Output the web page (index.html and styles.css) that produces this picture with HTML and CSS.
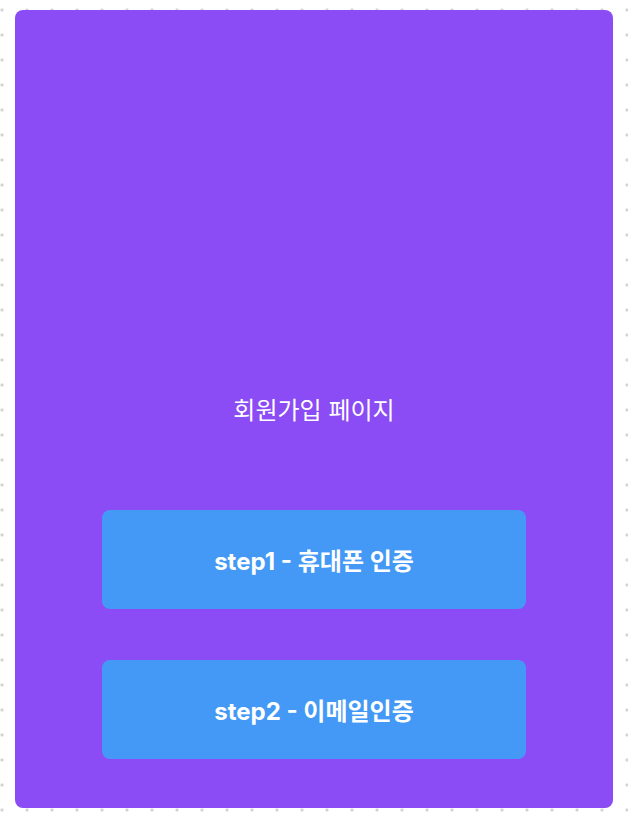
FILE: index.html
```html
<!DOCTYPE html>
<html lang="ko">
<head>
<meta charset="utf-8">
<title>회원가입 페이지</title>
<link rel="stylesheet" href="styles.css">
</head>
<body>
  <main class="card">
    <h1 class="title">회원가입 페이지</h1>
    <div class="actions">
      <button class="step-btn" type="button">step1 - 휴대폰 인증</button>
      <button class="step-btn" type="button">step2 - 이메일인증</button>
    </div>
  </main>
</body>
</html>
```
FILE: styles.css
```css
html, body {
  margin: 0;
  height: 100%;
}
body {
  padding: 10px 15px 0 15px;
  box-sizing: border-box;
  background-color: #ffffff;
  background-image: radial-gradient(circle, #c8c8c8 1.1px, transparent 1.6px);
  background-size: 25px 25px;
  background-position: -10.5px -2.5px;
  font-family: Inter, "Noto Sans CJK KR", sans-serif;
}
.card {
  width: 598px;
  height: 798px;
  box-sizing: border-box;
  background: #8b4bf5;
  border-radius: 8px;
  display: flex;
  flex-direction: column;
  align-items: center;
  justify-content: flex-end;
  padding-bottom: 49px;
}
.title {
  margin: 0 0 83px 0;
  font-size: 24px;
  font-weight: 400;
  line-height: 32px;
  color: #ffffff;
}
.actions {
  display: flex;
  flex-direction: column;
  gap: 51px;
}
.step-btn {
  width: 424px;
  height: 99px;
  border: none;
  border-radius: 8px;
  background: #4499f6;
  color: #ffffff;
  font-family: Inter, "Noto Sans CJK KR", sans-serif;
  font-size: 24px;
  font-weight: 700;
  cursor: pointer;
}
```
